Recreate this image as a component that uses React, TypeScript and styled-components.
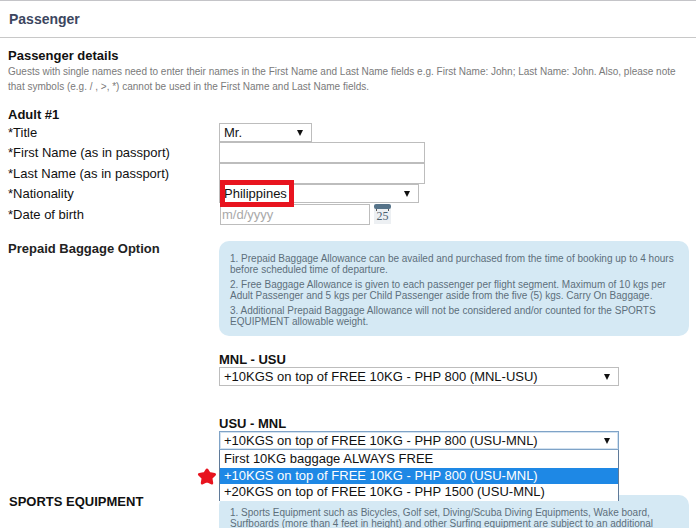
import React from "react";
import styled, { createGlobalStyle } from "styled-components";

const Global = createGlobalStyle`
  html, body { margin: 0; padding: 0; background: #fff; }
  body { font-family: "Liberation Sans", Arial, sans-serif; color: #111; width: 696px; height: 528px; overflow: hidden; }
`;
const Page = styled.div`
  position: relative; width: 696px; height: 528px; overflow: hidden;
  border-top: 1px solid #c4c4c8; box-sizing: border-box;
`;
const Header = styled.h1`
  margin: 0; height: 37px; box-sizing: border-box; padding: 10px 0 0 9px;
  font-size: 14px; line-height: 16px; font-weight: bold; color: #3c4660;
  border-bottom: 1px solid #c8c8c8;
`;
const Body = styled.div`padding: 10px 0 0 8px;`;
const SectionTitle = styled.h2`
  margin: 0; font-size: 13px; line-height: 16px; font-weight: bold; color: #111;
`;
const Hint = styled.p`
  margin: 0; font-size: 10px; line-height: 15px; color: #7a7a7a; width: 680px;
`;
const AdultTitle = styled.h3`
  margin: 13px 0 0; font-size: 13px; line-height: 16px; font-weight: bold; color: #111;
`;
const FormGrid = styled.div`
  display: grid; grid-template-columns: 211px 1fr; grid-auto-rows: auto; margin-top: 0;
`;
const Label = styled.div<{ $h: number }>`
  height: ${p => p.$h}px; font-size: 13px; line-height: ${p => p.$h}px; color: #111; white-space: nowrap;
`;
const FieldCell = styled.div<{ $h: number }>`
  height: ${p => p.$h}px; display: flex; align-items: flex-start; gap: 3px;
`;
const SelectBox = styled.div<{ $w: number; $h?: number; $focus?: boolean }>`
  width: ${p => p.$w}px; height: ${p => p.$h ?? 19}px; box-sizing: border-box;
  border: 1px solid ${p => (p.$focus ? "#7fa3c7" : "#bdbdbd")};
  box-shadow: ${p => (p.$focus ? "inset 0 0 0 1px #d3e2f0" : "none")};
  display: flex; align-items: center; justify-content: space-between;
  padding: 0 8px 0 4px; font-size: 13px; color: #111; background: #fff; white-space: nowrap;
`;
const Arrow = styled.span`
  width: 0; height: 0; border-left: 3.5px solid transparent; border-right: 3.5px solid transparent;
  border-top: 6px solid #111;
`;
const TextInput = styled.div<{ $w: number; $h: number }>`
  width: ${p => p.$w}px; height: ${p => p.$h}px; box-sizing: border-box; border: 1px solid #bdbdbd;
  padding: 0 0 0 1px; font-size: 13px; line-height: ${p => p.$h - 2}px; color: #a9a9a9; background: #fff;
`;
const DateInput = styled(TextInput)`margin-left: 1px;`;
const BaggageRow = styled.div`
  display: grid; grid-template-columns: 211px 1fr; margin-top: 16px;
`;
const BaggageLabel = styled.div`
  font-size: 13px; line-height: 16px; font-weight: bold; color: #222;
`;
const InfoBox = styled.div`
  width: 470px; height: 95px; box-sizing: border-box; background: #d5e9f4; border-radius: 10px;
  padding: 12px 10px 0 11px; color: #5d6f7b; font-size: 10px; line-height: 11px;
`;
const InfoPara = styled.p`margin: 0 0 4px;`;
const Route = styled.div<{ $top: number }>`margin-top: ${p => p.$top}px;`;
const RouteLabel = styled.div`
  font-size: 13px; line-height: 14px; font-weight: bold; color: #111;
`;
const DropWrap = styled.div`position: relative; width: 400px;`;
const DropList = styled.div`
  position: absolute; left: 0; top: 19px; width: 400px; height: 51px; box-sizing: border-box;
  background: #fff; border: 1px solid #5f7a99; border-top: none; padding-top: 1px; z-index: 3;
`;
const Option = styled.div<{ $active?: boolean }>`
  height: 16.5px; line-height: 16.5px; padding-left: 4px; font-size: 13px; white-space: nowrap;
  background: ${p => (p.$active ? "#1e88e5" : "#fff")}; color: ${p => (p.$active ? "#fff" : "#111")};
`;
const SportsRow = styled.div`
  display: grid; grid-template-columns: 211px 1fr; margin-top: 45px; position: relative;
`;
const SportsLabel = styled.div`
  font-size: 13px; line-height: 16px; font-weight: bold; color: #111; padding: 0 0 0 1px; margin-top: -1px;
`;
const Highlight = styled.div`
  position: absolute; left: 220px; top: 179px; width: 74px; height: 27px; box-sizing: border-box;
  border: 5px solid #e8141f; pointer-events: none; z-index: 4;
`;
const StarMark = styled.svg`
  position: absolute; left: 197px; top: 467px; width: 20px; height: 17px; z-index: 4;
`;

const Calendar = () => (
  <svg width="19" height="21" viewBox="0 0 19 21">
    <rect x="1" y="4" width="17" height="16" fill="#edf0f3" />
    <rect x="1" y="0" width="17" height="5" rx="2" fill="#567389" />
    <rect x="3" y="5" width="1" height="2" fill="#555" />
    <rect x="15" y="5" width="1" height="2" fill="#555" />
    <text x="9.5" y="16" fontSize="12" fontFamily="Liberation Serif, serif" textAnchor="middle" fill="#4c6070">25</text>
  </svg>
);

export default function App() {
  return (
    <>
      <Global />
      <Page>
        <Header>Passenger</Header>
        <Body>
          <SectionTitle>Passenger details</SectionTitle>
          <Hint>
            Guests with single names need to enter their names in the First Name and Last Name fields e.g. First Name: John; Last Name: John. Also, please note that symbols (e.g. / , &gt;, *) cannot be used in the First Name and Last Name fields.
          </Hint>
          <AdultTitle>Adult #1</AdultTitle>
          <FormGrid>
            <Label $h={19}>*Title</Label>
            <FieldCell $h={19}><SelectBox $w={93}>Mr.<Arrow /></SelectBox></FieldCell>
            <Label $h={21}>*First Name (as in passport)</Label>
            <FieldCell $h={21}><TextInput $w={206} $h={21} /></FieldCell>
            <Label $h={21}>*Last Name (as in passport)</Label>
            <FieldCell $h={21}><TextInput $w={206} $h={21} /></FieldCell>
            <Label $h={20}>*Nationality</Label>
            <FieldCell $h={20}><SelectBox $w={200}>Philippines<Arrow /></SelectBox></FieldCell>
            <Label $h={21}>*Date of birth</Label>
            <FieldCell $h={21}><DateInput $w={150} $h={21}>m/d/yyyy</DateInput><Calendar /></FieldCell>
          </FormGrid>
          <BaggageRow>
            <BaggageLabel>Prepaid Baggage Option</BaggageLabel>
            <div>
              <InfoBox>
                <InfoPara>1. Prepaid Baggage Allowance can be availed and purchased from the time of booking up to 4 hours before scheduled time of departure.</InfoPara>
                <InfoPara>2. Free Baggage Allowance is given to each passenger per flight segment. Maximum of 10 kgs per Adult Passenger and 5 kgs per Child Passenger aside from the five (5) kgs. Carry On Baggage.</InfoPara>
                <InfoPara>3. Additional Prepaid Baggage Allowance will not be considered and/or counted for the SPORTS EQUIPMENT allowable weight.</InfoPara>
              </InfoBox>
              <Route $top={17}>
                <RouteLabel>MNL - USU</RouteLabel>
                <SelectBox $w={400}>+10KGS on top of FREE 10KG - PHP 800 (MNL-USU)<Arrow /></SelectBox>
              </Route>
              <Route $top={31}>
                <RouteLabel>USU - MNL</RouteLabel>
                <DropWrap>
                  <SelectBox $w={400} $focus>+10KGS on top of FREE 10KG - PHP 800 (USU-MNL)<Arrow /></SelectBox>
                  <DropList>
                    <Option>First 10KG baggage ALWAYS FREE</Option>
                    <Option $active>+10KGS on top of FREE 10KG - PHP 800 (USU-MNL)</Option>
                    <Option>+20KGS on top of FREE 10KG - PHP 1500 (USU-MNL)</Option>
                  </DropList>
                </DropWrap>
              </Route>
            </div>
          </BaggageRow>
          <SportsRow>
            <SportsLabel>SPORTS EQUIPMENT</SportsLabel>
            <InfoBox>
              <InfoPara>1. Sports Equipment such as Bicycles, Golf set, Diving/Scuba Diving Equipments, Wake board, Surfboards (more than 4 feet in height) and other Surfing equipment are subject to an additional</InfoPara>
            </InfoBox>
          </SportsRow>
        </Body>
        <Highlight />
        <StarMark viewBox="0 0 20 17">
          <path d="M10 2l2.2 3.6 5.3.8-3.6 3.6.8 5-4.7-2.3-4.7 2.3.8-5-3.6-3.6 5.3-.8z" fill="#e8141f" stroke="#e8141f" strokeWidth="3" strokeLinejoin="round" />
        </StarMark>
      </Page>
    </>
  );
}
